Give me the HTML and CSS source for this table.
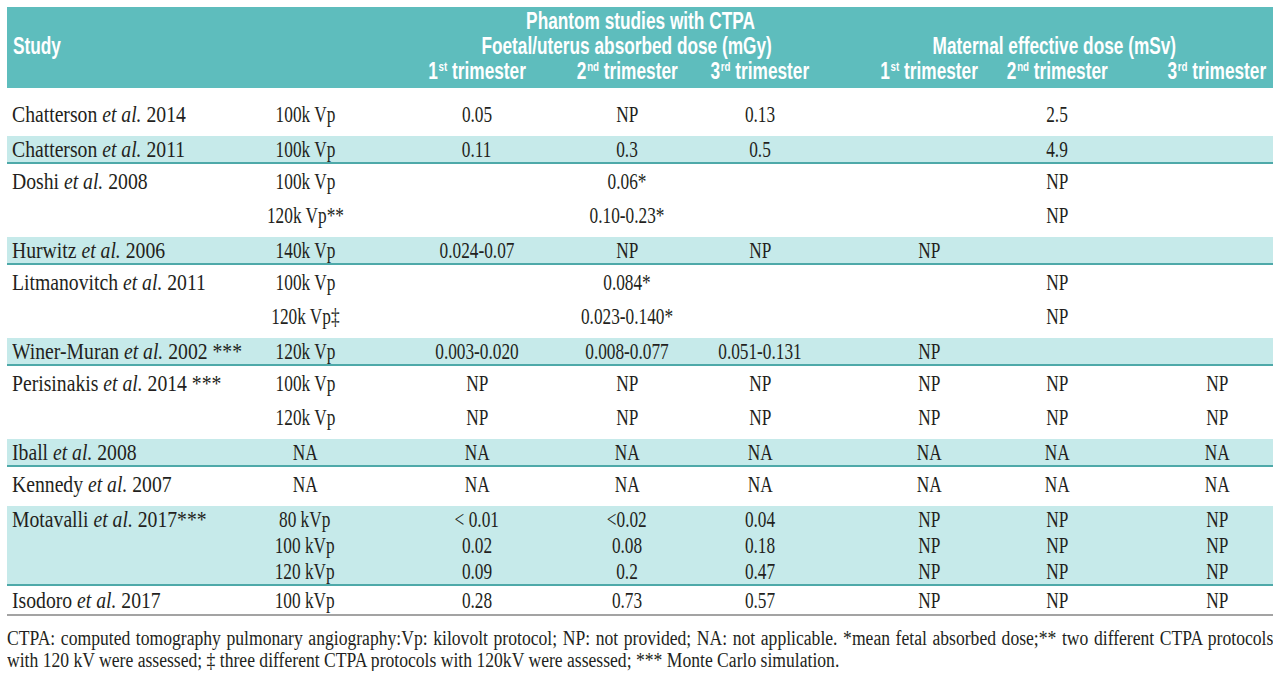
FILE: index.html
```html
<!DOCTYPE html>
<html lang="en">
<head>
<meta charset="utf-8">
<title>Phantom studies with CTPA</title>
<link rel="stylesheet" href="styles.css">
</head>
<body>
<div class="page">
<table class="dose">
<colgroup>
<col class="c0"><col class="c1"><col class="c2"><col class="c3"><col class="c4"><col class="c5"><col class="c6"><col class="c7">
</colgroup>
<thead>
<tr class="h1"><th></th><th></th><th colspan="3" class="phantom"><span>Phantom studies with CTPA</span></th><th colspan="3"></th></tr>
<tr class="h2"><th class="study"><span>Study</span></th><th></th><th colspan="3" class="foetal"><span>Foetal/uterus absorbed dose (mGy)</span></th><th colspan="3" class="maternal"><span>Maternal effective dose (mSv)</span></th></tr>
<tr class="h3"><th></th><th></th><th><span>1<sup>st</sup> trimester</span></th><th><span>2<sup>nd</sup> trimester</span></th><th><span>3<sup>rd</sup> trimester</span></th><th><span>1<sup>st</sup> trimester</span></th><th><span>2<sup>nd</sup> trimester</span></th><th><span>3<sup>rd</sup> trimester</span></th></tr>
</thead>
<tbody class="w first">
<tr><td><span>Chatterson <i>et al.</i> 2014</span></td><td><span>100k Vp</span></td><td><span>0.05</span></td><td><span>NP</span></td><td><span>0.13</span></td><td></td><td><span>2.5</span></td><td></td></tr>
</tbody>
<tbody class="hl">
<tr><td><span>Chatterson <i>et al.</i> 2011</span></td><td><span>100k Vp</span></td><td><span>0.11</span></td><td><span>0.3</span></td><td><span>0.5</span></td><td></td><td><span>4.9</span></td><td></td></tr>
</tbody>
<tbody class="w">
<tr><td><span>Doshi <i>et al.</i> 2008</span></td><td><span>100k Vp</span></td><td></td><td><span>0.06*</span></td><td></td><td></td><td><span>NP</span></td><td></td></tr>
<tr><td></td><td><span>120k Vp**</span></td><td></td><td><span>0.10-0.23*</span></td><td></td><td></td><td><span>NP</span></td><td></td></tr>
</tbody>
<tbody class="hl">
<tr><td><span>Hurwitz <i>et al.</i> 2006</span></td><td><span>140k Vp</span></td><td><span>0.024-0.07</span></td><td><span>NP</span></td><td><span>NP</span></td><td><span>NP</span></td><td></td><td></td></tr>
</tbody>
<tbody class="w">
<tr><td><span>Litmanovitch <i>et al.</i> 2011</span></td><td><span>100k Vp</span></td><td></td><td><span>0.084*</span></td><td></td><td></td><td><span>NP</span></td><td></td></tr>
<tr><td></td><td><span>120k Vp‡</span></td><td></td><td><span>0.023-0.140*</span></td><td></td><td></td><td><span>NP</span></td><td></td></tr>
</tbody>
<tbody class="hl">
<tr><td><span>Winer-Muran <i>et al.</i> 2002 ***</span></td><td><span>120k Vp</span></td><td><span>0.003-0.020</span></td><td><span>0.008-0.077</span></td><td><span>0.051-0.131</span></td><td><span>NP</span></td><td></td><td></td></tr>
</tbody>
<tbody class="w">
<tr><td><span>Perisinakis <i>et al.</i> 2014 ***</span></td><td><span>100k Vp</span></td><td><span>NP</span></td><td><span>NP</span></td><td><span>NP</span></td><td><span>NP</span></td><td><span>NP</span></td><td><span>NP</span></td></tr>
<tr><td></td><td><span>120k Vp</span></td><td><span>NP</span></td><td><span>NP</span></td><td><span>NP</span></td><td><span>NP</span></td><td><span>NP</span></td><td><span>NP</span></td></tr>
</tbody>
<tbody class="hl">
<tr><td><span>Iball <i>et al.</i> 2008</span></td><td><span>NA</span></td><td><span>NA</span></td><td><span>NA</span></td><td><span>NA</span></td><td><span>NA</span></td><td><span>NA</span></td><td><span>NA</span></td></tr>
</tbody>
<tbody class="w">
<tr><td><span>Kennedy <i>et al.</i> 2007</span></td><td><span>NA</span></td><td><span>NA</span></td><td><span>NA</span></td><td><span>NA</span></td><td><span>NA</span></td><td><span>NA</span></td><td><span>NA</span></td></tr>
</tbody>
<tbody class="hl">
<tr><td><span>Motavalli <i>et al.</i> 2017***</span></td><td><span>80 kVp</span></td><td><span>&lt; 0.01</span></td><td><span>&lt;0.02</span></td><td><span>0.04</span></td><td><span>NP</span></td><td><span>NP</span></td><td><span>NP</span></td></tr>
<tr><td></td><td><span>100 kVp</span></td><td><span>0.02</span></td><td><span>0.08</span></td><td><span>0.18</span></td><td><span>NP</span></td><td><span>NP</span></td><td><span>NP</span></td></tr>
<tr><td></td><td><span>120 kVp</span></td><td><span>0.09</span></td><td><span>0.2</span></td><td><span>0.47</span></td><td><span>NP</span></td><td><span>NP</span></td><td><span>NP</span></td></tr>
</tbody>
<tbody class="end">
<tr><td><span>Isodoro <i>et al.</i> 2017</span></td><td><span>100 kVp</span></td><td><span>0.28</span></td><td><span>0.73</span></td><td><span>0.57</span></td><td><span>NP</span></td><td><span>NP</span></td><td><span>NP</span></td></tr>
</tbody>
</table>
<div class="note-wrap">
<p class="note"><span class="l1">CTPA: computed tomography pulmonary angiography:Vp: kilovolt protocol; NP: not provided; NA: not applicable. *mean fetal absorbed dose;** two different CTPA protocols</span><span class="l2">with 120 kV were assessed; ‡ three different CTPA protocols with 120kV were assessed; *** Monte Carlo simulation.</span></p>
</div>
</div>
</body>
</html>
```
FILE: styles.css
```css
* { box-sizing: border-box; }
html, body { margin: 0; padding: 0; background: #ffffff; }
body {
  color: #231f20;
  font-family: "Liberation Serif", "Times New Roman", serif;
}
.page { padding: 7px 7px 0; }

.dose {
  width: 1266px;
  table-layout: fixed;
  border-collapse: separate;
  border-spacing: 0;
}
.c0 { width: 243px; }
.c1 { width: 141px; }
.c2 { width: 161px; }
.c3 { width: 141px; }
.c4 { width: 151px; }
.c5 { width: 149px; }
.c6 { width: 144px; }
.c7 { width: 136px; }

.dose th, .dose td {
  padding: 0;
  text-align: center;
  vertical-align: top;
  font-weight: normal;
}

/* header */
.dose thead th {
  background: #5ebdbd;
  color: #ffffff;
  font-family: "Liberation Sans", Arial, sans-serif;
  font-weight: 700;
  font-size: 23px;
  line-height: 25px;
  white-space: nowrap;
}
.dose thead th span {
  display: inline-block;
  white-space: nowrap;
  transform: scaleX(0.75);
}
.dose .h3 th span { margin: 0 -24px; }
.dose .h1 th { padding-top: 2px; }
.dose .h3 th { padding-bottom: 4px; }
.dose .study { text-align: left; padding-left: 6px; }
.dose .study span { transform-origin: 0 50%; }
.dose .phantom { padding-left: 45px; }
.dose .foetal { padding-left: 19px; }
.dose .maternal { padding-right: 9px; }
.dose sup {
  font-size: 13px;
  line-height: 0;
  vertical-align: 8px;
  margin-left: 1px;
}

/* column centre offsets */
.dose tbody td:nth-child(2), .dose .h3 th:nth-child(2) { padding-right: 31px; }
.dose tbody td:nth-child(3), .dose .h3 th:nth-child(3) { padding-left: 11px; }
.dose tbody td:nth-child(4), .dose .h3 th:nth-child(4) { padding-left: 9px; }
.dose tbody td:nth-child(5), .dose .h3 th:nth-child(5) { padding-right: 17px; }
.dose tbody td:nth-child(6), .dose .h3 th:nth-child(6) { padding-left: 21px; }
.dose tbody td:nth-child(7), .dose .h3 th:nth-child(7) { padding-right: 16px; }
.dose tbody td:nth-child(8), .dose .h3 th:nth-child(8) { padding-left: 24px; }

/* body */
.dose tbody { font-size: 24px; }
.dose tbody td span {
  display: inline-block;
  white-space: nowrap;
  transform: scaleX(0.72);
}
.dose tbody td:first-child { text-align: left; padding-left: 5px; }
.dose tbody td:first-child span {
  transform-origin: 0 50%;
  transform: scaleX(0.82);
}

.w td { line-height: 34px; }
.w tr:last-child td { padding-bottom: 5px; }
.first tr:first-child td { padding-top: 9px; }

.hl td { background: #c6eaea; line-height: 26px; }
.hl tr:last-child td { border-bottom: 2px solid #4ea9a9; }

.end td { line-height: 28px; border-bottom: 2px solid #a3a3a3; }

/* footnote */
.note-wrap { width: 1266px; overflow: hidden; }
.note {
  margin: 11px 0 0;
  width: 1439px;
  transform: scaleX(0.88);
  transform-origin: 0 0;
  font-size: 20px;
  line-height: 22px;
}
.l1 { display: block; text-align: justify; text-align-last: justify; }
.l2 { display: block; }
```
